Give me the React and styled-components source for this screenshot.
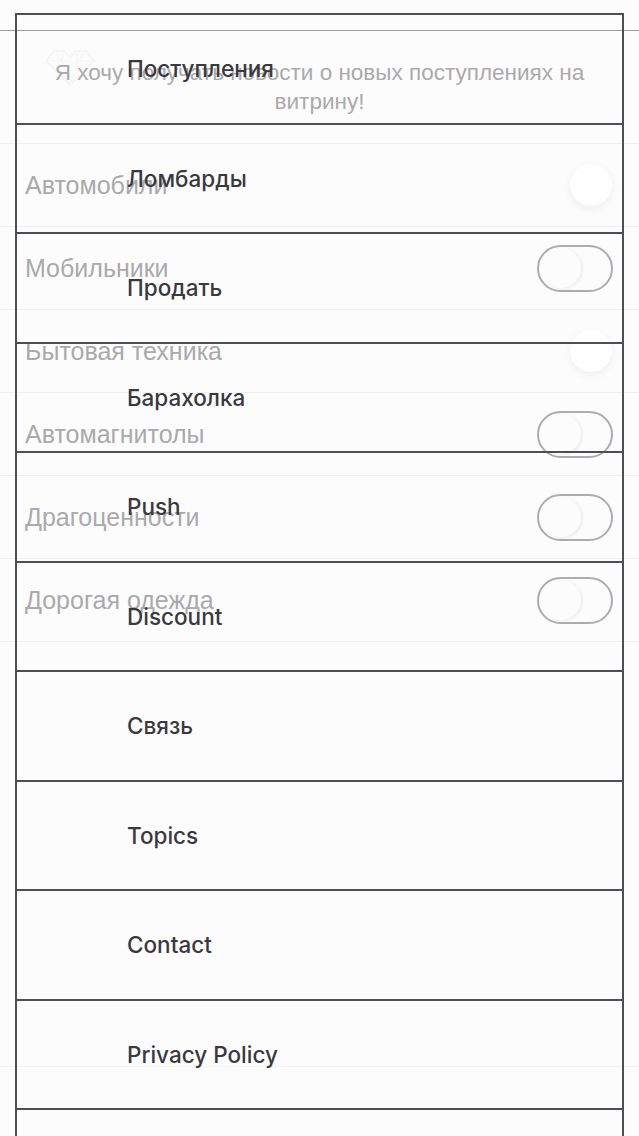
import styled, { createGlobalStyle } from 'styled-components';

const GlobalStyle = createGlobalStyle`
  html, body {
    margin: 0;
    padding: 0;
    background: #fdfcfd;
    font-family: "Liberation Sans", Arial, sans-serif;
  }
`;

const categories = [
  { name: 'Автомобили', mode: 'knob' },
  { name: 'Мобильники', mode: 'outline' },
  { name: 'Бытовая техника', mode: 'knob' },
  { name: 'Автомагнитолы', mode: 'outline' },
  { name: 'Драгоценности', mode: 'outline' },
  { name: 'Дорогая одежда', mode: 'outline' },
];

const menu = [
  'Поступления',
  'Ломбарды',
  'Продать',
  'Барахолка',
  'Push',
  'Discount',
  'Связь',
  'Topics',
  'Contact',
  'Privacy Policy',
  '',
];

function App() {
  return (
    <Page>
      <GlobalStyle />
      <Settings>
        <TopBar />
        <Intro>
          <Logo viewBox="0 0 60 44">
            <path d="M30 40 L6 16 L14 6 L24 6 L30 12 L36 6 L46 6 L54 16 Z" fill="none" stroke="#f3f2f4" strokeWidth="1.5" />
            <path d="M6 16 H54 M14 6 L22 16 L30 40 L38 16 L46 6 M24 6 L22 16 M36 6 L38 16" fill="none" stroke="#f5f4f6" strokeWidth="1" />
          </Logo>
          <IntroText>Я хочу получать новости о новых поступлениях на витрину!</IntroText>
        </Intro>
        {categories.map((c) => (
          <Row key={c.name}>
            <Label>{c.name}</Label>
            {c.mode === 'outline' ? (
              <Track><Thumb /></Track>
            ) : (
              <LoneKnob />
            )}
          </Row>
        ))}
        <Footer />
      </Settings>

      <Menu>
        {menu.map((item, i) => (
          <MenuItem key={i}>{item}</MenuItem>
        ))}
      </Menu>
    </Page>
  );
}

export default App;

const Page = styled.div`
  position: relative;
  width: 639px;
  height: 1136px;
  overflow: hidden;
  background: #fdfcfd;
`;

const Settings = styled.div`
  display: flex;
  flex-direction: column;
`;

const TopBar = styled.div`
  height: 30px;
  border-bottom: 1px solid #9d9d9f;
`;

const Intro = styled.div`
  position: relative;
  height: 112px;
  display: flex;
  align-items: center;
  justify-content: center;
  padding: 0 48px;
  border-bottom: 1px solid #f0eff1;
`;

const Logo = styled.svg`
  position: absolute;
  left: 40px;
  top: 14px;
  width: 60px;
  height: 44px;
`;

const IntroText = styled.p`
  position: relative;
  margin: 0;
  text-align: center;
  font-size: 22.5px;
  line-height: 29px;
  color: #aaa9ac;
`;

const Row = styled.div`
  height: 83px;
  display: flex;
  align-items: center;
  justify-content: space-between;
  padding: 0 26px 0 25px;
  border-bottom: 1px solid #f0eff1;
  box-sizing: border-box;
`;

const Label = styled.span`
  font-size: 25px;
  color: #aaa9ac;
`;

const Track = styled.div`
  width: 76px;
  height: 47px;
  box-sizing: border-box;
  border: 2.5px solid #acabae;
  border-radius: 24px;
  display: flex;
  align-items: center;
  padding-left: 2px;
`;

const Thumb = styled.div`
  width: 40px;
  height: 40px;
  border-radius: 50%;
  background: #fdfcfd;
  box-shadow: 2px 1px 3px rgba(0, 0, 0, 0.06);
`;

const LoneKnob = styled.div`
  width: 42px;
  height: 42px;
  margin-right: 1px;
  border-radius: 50%;
  background: #fefefe;
  box-shadow: 0 3px 8px rgba(0, 0, 0, 0.06);
`;

const Footer = styled.div`
  height: 424px;
  border-bottom: 1px solid #f3f2f4;
`;

const Menu = styled.div`
  position: absolute;
  top: 13px;
  left: 15px;
  width: 609px;
  box-sizing: border-box;
  border: 2px solid #4f4e52;
  border-bottom: none;
  display: flex;
  flex-direction: column;
`;

const MenuItem = styled.div`
  height: 109.5px;
  box-sizing: border-box;
  border-bottom: 2px solid #4f4e52;
  display: flex;
  align-items: center;
  padding-left: 110px;
  font-family: Inter, "Liberation Sans", sans-serif;
  font-weight: 500;
  font-size: 22.5px;
  color: #3a393d;
`;
